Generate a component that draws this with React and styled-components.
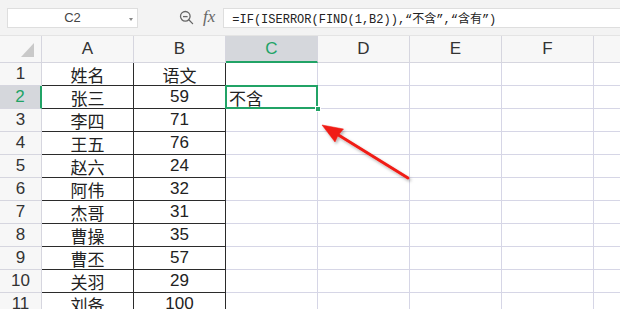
import React from "react";
import styled, { createGlobalStyle } from "styled-components";

const Global = createGlobalStyle`
  html, body { margin: 0; padding: 0; background: #fff; }
  body { font-family: "Liberation Sans", "Noto Sans CJK SC", sans-serif; }
  * { box-sizing: border-box; }
`;

const Page = styled.div`
  position: relative;
  width: 620px;
  height: 309px;
  overflow: hidden;
  background: #fff;
`;

const Toolbar = styled.div`
  display: flex;
  align-items: center;
  height: 36px;
  padding: 8px 0 8px 7px;
  background: #f3f3f3;
  border-bottom: 1px solid #e4e4e4;
`;

const NameBox = styled.div`
  position: relative;
  display: flex;
  align-items: center;
  justify-content: center;
  width: 131px;
  height: 20px;
  background: #fff;
  border: 1px solid #dedede;
  font-size: 13px;
  color: #444;
`;

const Caret = styled.span`
  position: absolute;
  right: 4px;
  top: 9px;
  width: 0;
  height: 0;
  border-left: 2.5px solid transparent;
  border-right: 2.5px solid transparent;
  border-top: 3px solid #888;
`;

const Tools = styled.div`
  display: flex;
  align-items: center;
  gap: 9px;
  margin-left: 41px;
  margin-right: 8px;
`;

const Fx = styled.span`
  font-family: "Liberation Serif", serif;
  font-style: italic;
  font-size: 17px;
  color: #666;
  line-height: 1;
  margin-top: -2px;
`;

const Formula = styled.div`
  flex: 1;
  height: 20px;
  display: flex;
  align-items: center;
  padding-left: 8px;
  background: #fff;
  border: 1px solid #dedede;
  border-right: none;
  font-family: "Liberation Mono", "Noto Sans CJK SC", monospace;
  font-size: 12px;
  color: #222;
  white-space: pre;
`;

const Grid = styled.div`
  display: grid;
  grid-template-columns: 42px repeat(7, 92px);
  grid-template-rows: 27px;
  grid-auto-rows: 23px;
`;

const Corner = styled.div`
  position: relative;
  background: #f7f7f7;
  border-right: 1px solid #d6d6df;
  border-bottom: 1px solid #d6d6df;
  &::after {
    content: "";
    position: absolute;
    right: 7px;
    bottom: 5px;
    width: 0;
    height: 0;
    border-left: 13px solid transparent;
    border-bottom: 14px solid #c9c9c9;
  }
`;

const ColHead = styled.div`
  display: flex;
  align-items: center;
  justify-content: center;
  background: ${(p) => (p.$active ? "#d5d7dc" : "#f7f7f7")};
  border-right: 1px solid #d6d6df;
  border-bottom: ${(p) => (p.$active ? "2px solid #21a366" : "1px solid #d6d6df")};
  color: ${(p) => (p.$active ? "#21a366" : "#333")};
  font-family: "Liberation Sans", sans-serif;
  font-size: 17px;
  padding-top: ${(p) => (p.$active ? "1px" : "0")};
`;

const RowHead = styled.div`
  display: flex;
  align-items: center;
  justify-content: center;
  background: ${(p) => (p.$active ? "#d5d7dc" : "#f7f7f7")};
  border-right: ${(p) => (p.$active ? "2px solid #21a366" : "1px solid #d6d6df")};
  border-bottom: 1px solid #d6d6df;
  color: ${(p) => (p.$active ? "#21a366" : "#333")};
  font-family: "Liberation Sans", sans-serif;
  font-size: 17px;
`;

const Cell = styled.div`
  position: relative;
  display: flex;
  align-items: center;
  justify-content: ${(p) => (p.$align === "left" ? "flex-start" : "center")};
  padding-left: ${(p) => (p.$align === "left" ? "3px" : "0")};
  border-right: 1px solid ${(p) => (p.$boxed ? "#2b2b2b" : "#d6d6e6")};
  border-bottom: 1px solid ${(p) => (p.$boxed ? "#2b2b2b" : "#d6d6e6")};
  font-family: "Liberation Sans", "Noto Sans CJK SC", sans-serif;
  font-size: 17px;
  color: #222;
  white-space: nowrap;
  ${(p) =>
    p.$selected &&
    `
    &::after {
      content: "";
      position: absolute;
      left: -1px;
      top: -1px;
      right: -1px;
      bottom: -1px;
      border: 2px solid #21a366;
      pointer-events: none;
    }
  `}
`;

const Handle = styled.span`
  position: absolute;
  right: -4px;
  bottom: -4px;
  width: 6px;
  height: 6px;
  background: #21a366;
  border: 1px solid #fff;
  z-index: 2;
`;

const ArrowLayer = styled.svg`
  position: absolute;
  left: 0;
  top: 0;
  pointer-events: none;
`;

const names = ["姓名", "张三", "李四", "王五", "赵六", "阿伟", "杰哥", "曹操", "曹丕", "关羽", "刘备"];
const scores = ["语文", 59, 71, 76, 24, 32, 31, 35, 57, 29, 100];
const cols = ["A", "B", "C", "D", "E", "F", ""];

function ZoomIcon() {
  return (
    <svg width="15" height="15" viewBox="0 0 15 15" fill="none" stroke="#666" strokeWidth="1.3">
      <circle cx="6.3" cy="6.3" r="4.8" />
      <line x1="4" y1="6.6" x2="8.6" y2="6.6" />
      <line x1="9.8" y1="9.8" x2="13.6" y2="13.6" strokeLinecap="round" />
    </svg>
  );
}

export default function App() {
  return (
    <Page>
      <Global />
      <Toolbar>
        <NameBox>
          C2
          <Caret />
        </NameBox>
        <Tools>
          <ZoomIcon />
          <Fx>fx</Fx>
        </Tools>
        <Formula>=IF(ISERROR(FIND(1,B2)),“不含”,“含有”)</Formula>
      </Toolbar>
      <Grid>
        <Corner />
        {cols.map((c, i) => (
          <ColHead key={i} $active={c === "C"}>
            {c}
          </ColHead>
        ))}
        {names.map((n, i) => (
          <React.Fragment key={i}>
            <RowHead $active={i === 1}>{i + 1}</RowHead>
            <Cell $boxed>{n}</Cell>
            <Cell $boxed>{scores[i]}</Cell>
            <Cell $align="left" $selected={i === 1}>
              {i === 1 ? "不含" : ""}
              {i === 1 && <Handle />}
            </Cell>
            <Cell />
            <Cell />
            <Cell />
            <Cell />
          </React.Fragment>
        ))}
      </Grid>
      <ArrowLayer width="620" height="309" viewBox="0 0 620 309">
        <defs>
          <filter id="sh" x="-20%" y="-20%" width="140%" height="140%">
            <feDropShadow dx="1.5" dy="2" stdDeviation="1.5" floodColor="#000" floodOpacity="0.3" />
          </filter>
        </defs>
        <g filter="url(#sh)" fill="#f01c14" stroke="#f01c14">
          <line x1="408" y1="178" x2="336" y2="133.5" strokeWidth="3" strokeLinecap="round" />
          <polygon points="322,125 343.5,129 338,135.5 335,142" strokeWidth="0.5" strokeLinejoin="round" />
        </g>
      </ArrowLayer>
    </Page>
  );
}
